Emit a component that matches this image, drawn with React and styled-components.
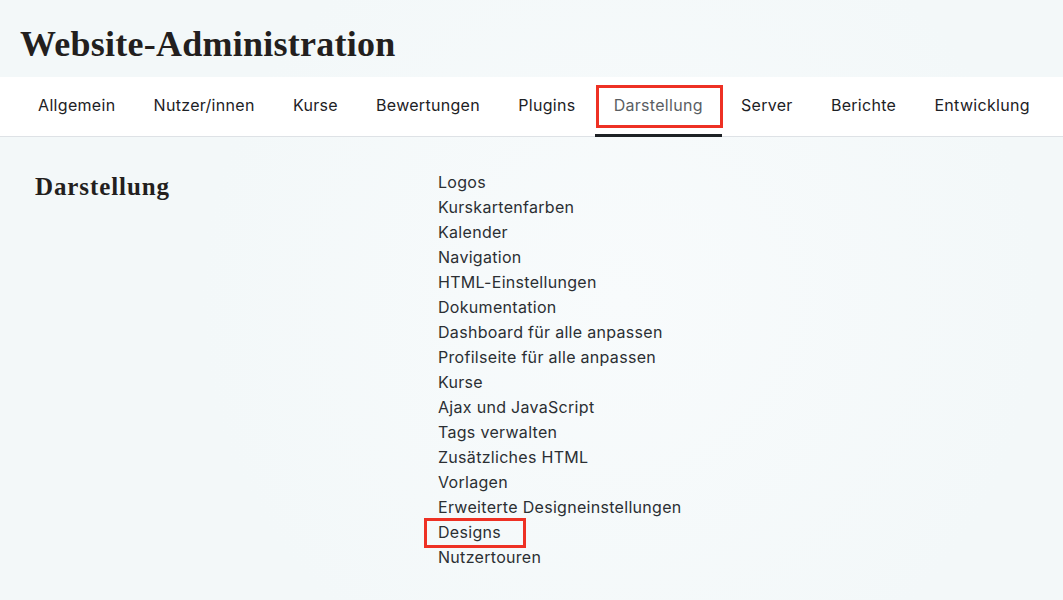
import React from 'react'
import styled, { createGlobalStyle } from 'styled-components'

const GlobalStyle = createGlobalStyle`
  body {
    margin: 0;
    background: #f3f8f9;
    font-family: Inter, "Noto Sans", sans-serif;
    color: #1d2125;
  }
`

const Page = styled.div`
  width: 1063px;
  height: 600px;
  overflow: hidden;
  background: radial-gradient(circle at 620px 300px, #f8fbfc 0, #f3f8f9 420px);
`

const Header = styled.header`
  padding: 24px 20px 0;
  height: 53px;
  box-sizing: border-box;
`

const Title = styled.h1`
  margin: 0;
  font-family: "Liberation Serif", "DejaVu Serif", serif;
  font-weight: 700;
  font-size: 36px;
  line-height: 40px;
  color: #231f1e;
  letter-spacing: 0.25px;
`

const TabBar = styled.nav`
  margin-top: 24px;
  height: 59px;
  background: #fff;
  border-bottom: 1px solid #dee2e6;
  display: flex;
  padding-left: 19px;
`

const Tab = styled.div`
  position: relative;
  display: flex;
  align-items: center;
  padding: 0 19.1px 2px;
  font-size: 16px;
  letter-spacing: 0.3px;
  color: ${p => (p.$active ? '#5a5e63' : '#1d2125')};
  border-bottom: 3px solid ${p => (p.$active ? '#1d2125' : 'transparent')};
  margin-bottom: -1px;
`

const Highlight = styled.span`
  position: absolute;
  border: 3px solid #ee3124;
  box-sizing: border-box;
  pointer-events: none;
  left: ${p => p.$left}px;
  top: ${p => p.$top}px;
  width: ${p => p.$w}px;
  height: ${p => p.$h}px;
`

const Content = styled.main`
  display: grid;
  grid-template-columns: 403px 1fr;
  padding: 33px 0 0 35px;
`

const Heading = styled.h2`
  margin: 2px 0 0;
  font-family: "Liberation Serif", "DejaVu Serif", serif;
  font-weight: 700;
  font-size: 25px;
  line-height: 30px;
  letter-spacing: 0.9px;
  color: #231f1e;
`

const List = styled.ul`
  list-style: none;
  margin: 0;
  padding: 0;
`

const Item = styled.li`
  position: relative;
  font-size: 16px;
  line-height: 25px;
  letter-spacing: 0.3px;
  color: #2b2f33;
`

const tabs = ['Allgemein', 'Nutzer/innen', 'Kurse', 'Bewertungen', 'Plugins', 'Darstellung', 'Server', 'Berichte', 'Entwicklung']

const items = [
  'Logos',
  'Kurskartenfarben',
  'Kalender',
  'Navigation',
  'HTML-Einstellungen',
  'Dokumentation',
  'Dashboard für alle anpassen',
  'Profilseite für alle anpassen',
  'Kurse',
  'Ajax und JavaScript',
  'Tags verwalten',
  'Zusätzliches HTML',
  'Vorlagen',
  'Erweiterte Designeinstellungen',
  'Designs',
  'Nutzertouren',
]

const App = () => {
  return (
    <Page>
      <GlobalStyle />
      <Header>
        <Title>Website-Administration</Title>
      </Header>
      <TabBar>
        {tabs.map(t => (
          <Tab key={t} $active={t === 'Darstellung'}>
            {t}
            {t === 'Darstellung' && <Highlight $left={1} $top={8} $w={127} $h={43} />}
          </Tab>
        ))}
      </TabBar>
      <Content>
        <Heading>Darstellung</Heading>
        <List>
          {items.map(i => (
            <Item key={i}>
              {i}
              {i === 'Designs' && <Highlight $left={-14} $top={-2} $w={102} $h={30} />}
            </Item>
          ))}
        </List>
      </Content>
    </Page>
  )
}

export default App
